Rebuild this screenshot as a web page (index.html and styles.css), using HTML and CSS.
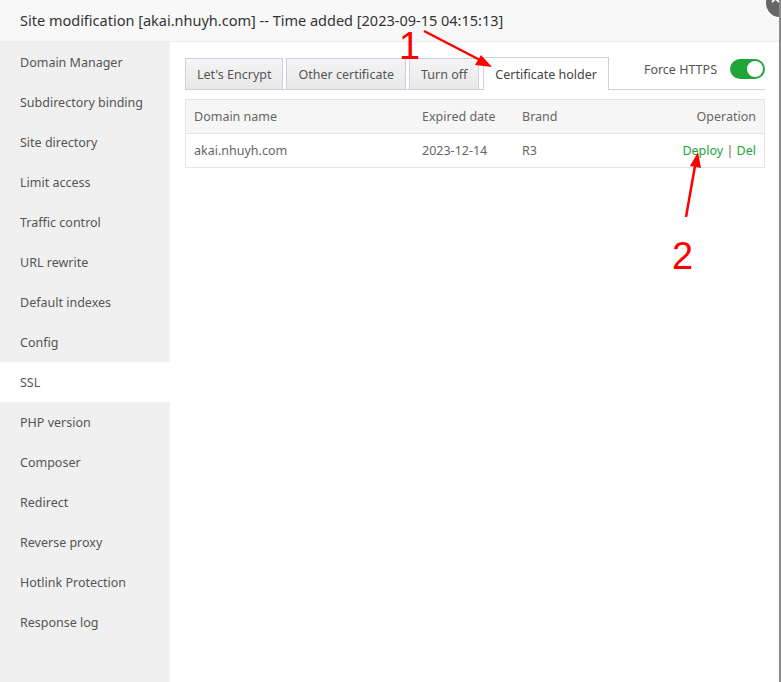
FILE: index.html
```html
<!DOCTYPE html>
<html lang="en">
<head>
    <meta charset="UTF-8">
    <title>Site modification</title>
    <link rel="stylesheet" href="styles.css">
</head>
<body>
    <div class="dialog">
        <div class="dialog-title">Site modification [akai.nhuyh.com] -- Time added [2023-09-15 04:15:13]</div>
        <svg class="close-btn" width="30" height="30" viewBox="0 0 30 30">
            <circle cx="15" cy="15" r="14" fill="#666"/>
            <path d="M7 7 L14 14 M14 7 L7 14" stroke="#fff" stroke-width="2"/>
        </svg>

        <div class="dialog-body">
            <ul class="side-menu">
                <li>Domain Manager</li>
                <li>Subdirectory binding</li>
                <li>Site directory</li>
                <li>Limit access</li>
                <li>Traffic control</li>
                <li>URL rewrite</li>
                <li>Default indexes</li>
                <li>Config</li>
                <li class="active">SSL</li>
                <li>PHP version</li>
                <li>Composer</li>
                <li>Redirect</li>
                <li>Reverse proxy</li>
                <li>Hotlink Protection</li>
                <li>Response log</li>
            </ul>

            <div class="content">
                <div class="tab-bar">
                    <span class="tab">Let's Encrypt</span>
                    <span class="tab">Other certificate</span>
                    <span class="tab">Turn off</span>
                    <span class="tab active">Certificate holder</span>
                    <div class="force-https">
                        <span>Force HTTPS</span>
                        <span class="switch"><span class="knob"></span></span>
                    </div>
                </div>

                <table class="cert-table">
                    <thead>
                        <tr>
                            <th class="col-domain">Domain name</th>
                            <th class="col-date">Expired date</th>
                            <th class="col-brand">Brand</th>
                            <th class="col-op">Operation</th>
                        </tr>
                    </thead>
                    <tbody>
                        <tr>
                            <td>akai.nhuyh.com</td>
                            <td>2023-12-14</td>
                            <td>R3</td>
                            <td class="col-op"><a href="#">Deploy</a> | <a href="#">Del</a></td>
                        </tr>
                    </tbody>
                </table>
            </div>
        </div>

        <!-- screenshot annotations -->
        <svg class="marks" width="781" height="682" viewBox="0 0 781 682">
            <text x="399" y="59" class="mark-num">1</text>
            <line x1="424" y1="31" x2="480" y2="60" stroke="#ff0000" stroke-width="2.5"/>
            <polygon points="492,67 475,65 481,55" fill="#ff0000"/>
            <text x="672" y="269" class="mark-num">2</text>
            <line x1="686" y1="217" x2="695" y2="166" stroke="#ff0000" stroke-width="2.5"/>
            <polygon points="698,152 701,168 690,166" fill="#ff0000"/>
        </svg>
    </div>
</body>
</html>
```

FILE: styles.css
```css
body {
    margin: 0;
    font-family: 'Noto Sans', 'Open Sans', sans-serif;
    background: #fff;
    overflow: hidden;
}

.dialog {
    position: relative;
    width: 781px;
    height: 682px;
    box-sizing: border-box;
    border-right: 2px solid #8a8a8a;
    background: #fff;
    overflow: hidden;
}

.dialog-title {
    height: 42px;
    line-height: 40px;
    padding-left: 20px;
    font-size: 14.5px;
    color: #333;
    background: #f8f8f8;
    border-bottom: 1px solid #eee;
    box-sizing: border-box;
}

.close-btn {
    position: absolute;
    top: -12px;
    right: -16px;
}

.dialog-body {
    display: flex;
    height: 640px;
}

.side-menu {
    list-style: none;
    margin: 0;
    padding: 0;
    width: 170px;
    background: #f0f0f0;
}

.side-menu li {
    height: 40px;
    line-height: 42px;
    padding-left: 20px;
    font-size: 12.5px;
    color: #555;
}

.side-menu li.active {
    background: #fff;
}

.content {
    flex: 1;
    padding: 15px 14px 0 15px;
}

.tab-bar {
    display: flex;
    align-items: flex-end;
    gap: 3px;
    height: 32px;
    border-bottom: 1px solid #cfcfe0;
}

.tab {
    height: 30px;
    line-height: 32px;
    padding: 0 11px;
    font-size: 12.5px;
    color: #555;
    background: linear-gradient(#f5f5f5, #e8e8e8);
    border: 1px solid #cfcfe0;
    border-bottom: none;
}

.tab.active {
    height: 32px;
    line-height: 34px;
    padding: 0 11px;
    margin-left: 1px;
    margin-bottom: -1px;
    background: #fff;
    color: #444;
}

.force-https {
    margin-left: auto;
    display: flex;
    align-items: center;
    gap: 13px;
    height: 32px;
    padding-bottom: 8px;
    box-sizing: border-box;
    font-size: 12.5px;
    color: #555;
}

.switch {
    position: relative;
    width: 35px;
    height: 20px;
    border-radius: 10px;
    background: #20a53a;
}

.knob {
    position: absolute;
    top: 2px;
    right: 2px;
    width: 16px;
    height: 16px;
    border-radius: 50%;
    background: #fff;
}

.cert-table {
    width: 100%;
    margin-top: 9px;
    border-collapse: collapse;
    border: 1px solid #e4e4e4;
    font-size: 12.5px;
}

.cert-table th {
    height: 33px;
    padding: 0 8px;
    text-align: left;
    font-weight: normal;
    color: #666;
    background: #f6f6f6;
    border-bottom: 1px solid #e4e4e4;
}

.cert-table td {
    height: 33px;
    padding: 0 8px;
    color: #666;
}

.col-domain { width: 212px; }
.col-date { width: 84px; }
.col-brand { width: 120px; }

.cert-table .col-op {
    text-align: right;
}

.cert-table a {
    color: #20a53a;
    text-decoration: none;
}

.marks {
    position: absolute;
    top: 0;
    left: 0;
    pointer-events: none;
}

.mark-num {
    font-family: 'Liberation Sans', sans-serif;
    font-size: 38px;
    fill: #ff0000;
}
```
